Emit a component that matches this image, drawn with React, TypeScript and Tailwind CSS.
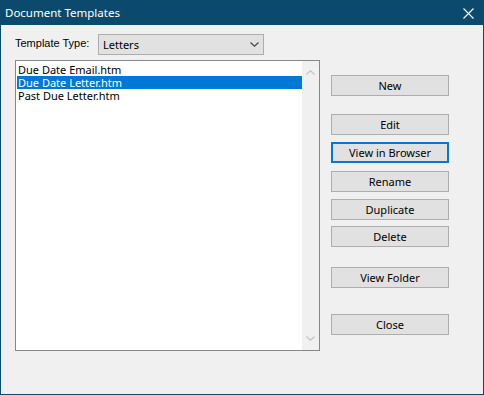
import React from 'react';

const items = ['Due Date Email.htm', 'Due Date Letter.htm', 'Past Due Letter.htm'];

const buttons = [
  { label: 'New', className: 'mt-[15px]' },
  { label: 'Edit', className: 'mt-[18px]' },
  { label: 'View in Browser', className: 'mt-[7px]', focused: true },
  { label: 'Rename', className: 'mt-[8px]' },
  { label: 'Duplicate', className: 'mt-[7px]' },
  { label: 'Delete', className: 'mt-[6px]' },
  { label: 'View Folder', className: 'mt-[20px]' },
  { label: 'Close', className: 'mt-[26px]' },
];

const Chevron: React.FC<{ up?: boolean; color: string }> = ({ up, color }) => (
  <svg width="9" height="5" viewBox="0 0 9 5" className="block">
    <path
      d={up ? 'M0.5 4.5 L4.5 0.8 L8.5 4.5' : 'M0.5 0.5 L4.5 4.2 L8.5 0.5'}
      fill="none"
      stroke={color}
      strokeWidth="1.2"
    />
  </svg>
);

const App: React.FC = () => {
  return (
    <div
      className="w-[484px] h-[395px] border border-[#0b4a6c] flex flex-col bg-[#f0f0f0] text-black"
      style={{ fontFamily: '"Noto Sans", "Liberation Sans", Arial, sans-serif' }}
    >
      <div className="h-[24px] bg-[#0b4a6c] flex items-center justify-between pl-[4px] pr-[9px] shrink-0">
        <span className="text-[11.5px] text-white leading-none">Document Templates</span>
        <svg width="11" height="11" viewBox="0 0 11 11">
          <path d="M0.5 0.5 L10.5 10.5 M10.5 0.5 L0.5 10.5" stroke="white" strokeWidth="1.1" />
        </svg>
      </div>

      <div className="flex flex-col px-[14px] pt-[9px] text-[11px]">
        <div className="flex items-center h-[21px]">
          <span
            className="w-[83px] -mt-[3px]"
            style={{ fontFamily: '"Liberation Sans", Arial, sans-serif' }}
          >
            Template Type:
          </span>
          <div className="w-[166px] h-[21px] border border-[#adadad] bg-[#e1e1e1] flex items-center justify-between pl-[4px] pr-[4px]">
            <span className="pt-px">Letters</span>
            <Chevron color="#444" />
          </div>
        </div>

        <div className="flex mt-[5px]">
          <div className="w-[305px] h-[291px] border border-[#828790] bg-white flex">
            <div className="flex-1 pl-px pt-[2px]">
              {items.map((item, i) => (
                <div
                  key={item}
                  className={`h-[13px] leading-[13px] pl-px overflow-hidden ${i === 1 ? 'bg-[#0078d7] text-white' : ''}`}
                >
                  {item}
                </div>
              ))}
            </div>
            <div className="w-[17px] bg-[#f0f0f0] flex flex-col items-center justify-between py-[9px]">
              <Chevron up color="#c2c2c2" />
              <Chevron color="#c2c2c2" />
            </div>
          </div>

          <div className="flex flex-col ml-[11px]">
            {buttons.map((b) => (
              <button
                key={b.label}
                className={`w-[118px] h-[21px] pt-px bg-[#e1e1e1] flex items-center justify-center text-[11px] ${
                  b.focused ? 'border-2 border-[#0078d7]' : 'border border-[#adadad]'
                } ${b.className}`}
              >
                {b.label}
              </button>
            ))}
          </div>
        </div>
      </div>
    </div>
  );
};

export default App;
